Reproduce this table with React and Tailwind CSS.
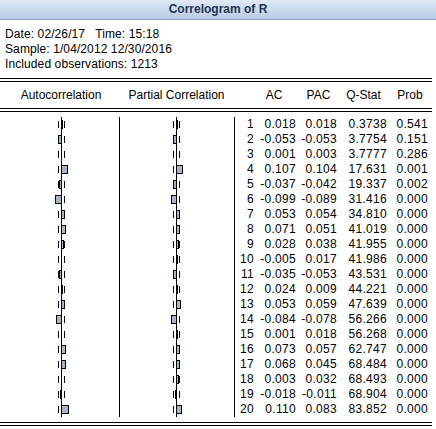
import React from 'react'

const rows = [
  ['1', '0.018', '0.018', '0.3738', '0.541'],
  ['2', '-0.053', '-0.053', '3.7754', '0.151'],
  ['3', '0.001', '0.003', '3.7777', '0.286'],
  ['4', '0.107', '0.104', '17.631', '0.001'],
  ['5', '-0.037', '-0.042', '19.337', '0.002'],
  ['6', '-0.099', '-0.089', '31.416', '0.000'],
  ['7', '0.053', '0.054', '34.810', '0.000'],
  ['8', '0.071', '0.051', '41.019', '0.000'],
  ['9', '0.028', '0.038', '41.955', '0.000'],
  ['10', '-0.005', '0.017', '41.986', '0.000'],
  ['11', '-0.035', '-0.053', '43.531', '0.000'],
  ['12', '0.024', '0.009', '44.221', '0.000'],
  ['13', '0.053', '0.059', '47.639', '0.000'],
  ['14', '-0.084', '-0.078', '56.266', '0.000'],
  ['15', '0.001', '0.018', '56.268', '0.000'],
  ['16', '0.073', '0.057', '62.747', '0.000'],
  ['17', '0.068', '0.045', '68.484', '0.000'],
  ['18', '0.003', '0.032', '68.493', '0.000'],
  ['19', '-0.018', '-0.011', '68.904', '0.000'],
  ['20', '0.110', '0.083', '83.852', '0.000'],
]

const SCALE = 60

function Bars({ axis, col }) {
  return (
    <g>
      <line x1={axis + 0.5} y1={0} x2={axis + 0.5} y2={300} stroke="#000" />
      {rows.map((r, i) => {
        const cy = 7.5 + i * 15
        const v = parseFloat(r[col])
        const w = Math.round(Math.abs(v) * SCALE)
        const x = v >= 0 ? axis + 0.5 : axis + 0.5 - w
        return (
          <g key={i}>
            <line x1={axis - 2.5} y1={cy - 3.5} x2={axis - 2.5} y2={cy + 3.5} stroke="#000" />
            <line x1={axis + 3.5} y1={cy - 3.5} x2={axis + 3.5} y2={cy + 3.5} stroke="#000" />
            {w > 0 && (
              <rect x={x} y={cy - 4} width={w} height={8} fill="#aab3cc" stroke="#000" />
            )}
          </g>
        )
      })}
    </g>
  )
}

export default function App() {
  return (
    <div className="w-[436px] h-[429px] bg-white text-black overflow-hidden font-['Liberation_Sans',Arial,sans-serif] text-[12px]">
      {/* title bar */}
      <div className="h-[20px] border-b border-[#8d9db5] bg-gradient-to-b from-[#e0e9f5] to-[#b8cce5] text-center font-bold text-[#243452] leading-[19px]">
        Correlogram of R
      </div>

      {/* info */}
      <div className="mt-[7px] pl-[5px] leading-[15px] tracking-[0.1px]">
        <div>Date: 02/26/17&nbsp;&nbsp; Time: 15:18</div>
        <div>Sample: 1/04/2012 12/30/2016</div>
        <div>Included observations: 1213</div>
      </div>

      <div className="mt-[6px] w-[432px] h-[4px] border-y border-black" />

      {/* header */}
      <div className="flex h-[26px] leading-[26px]">
        <div className="ml-[3px] w-[116px] text-center">Autocorrelation</div>
        <div className="w-[115px] text-center">Partial Correlation</div>
        <div className="w-[20px]" />
        <div className="w-[40px] text-center">AC</div>
        <div className="w-[49px] text-center">PAC</div>
        <div className="w-[41px] text-center">Q-Stat</div>
        <div className="w-[52px] text-center">Prob</div>
      </div>

      <div className="w-[432px] h-[4px] border-y border-black" />

      {/* body */}
      <div className="mt-[5px] flex h-[300px]">
        <svg width="234" height="300" className="block shrink-0" shapeRendering="crispEdges">
          <Bars axis={61} col={1} />
          <line x1={119.5} y1={0} x2={119.5} y2={300} stroke="#000" />
          <Bars axis={176} col={2} />
        </svg>
        <div className="border-l border-black leading-[15px] tracking-[0.3px]">
          {rows.map((r) => (
            <div key={r[0]} className="flex">
              <div className="w-[19px] text-right">{r[0]}</div>
              <div className="w-[42px] text-right">{r[1]}</div>
              <div className="w-[41px] text-right">{r[2]}</div>
              <div className="w-[50px] text-right">{r[3]}</div>
              <div className="w-[41px] text-right">{r[4]}</div>
            </div>
          ))}
        </div>
      </div>

      <div className="mt-[5px] w-[432px] h-[4px] border-y border-black" />
    </div>
  )
}
